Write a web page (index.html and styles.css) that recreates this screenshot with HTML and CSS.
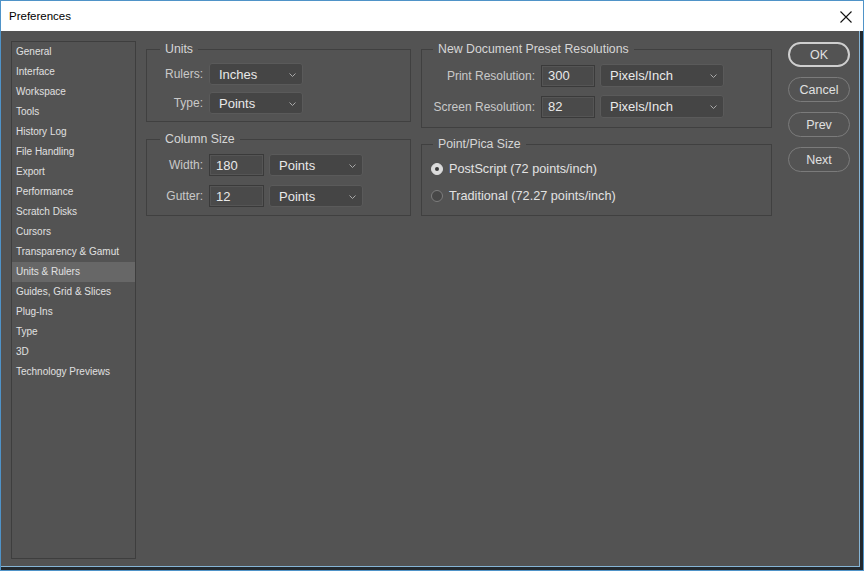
FILE: index.html
```html
<!DOCTYPE html>
<html>
<head>
<meta charset="utf-8">
<title>Preferences</title>
<link rel="stylesheet" href="styles.css">
</head>
<body>
<div class="window">
  <div class="titlebar">
    <span class="title">Preferences</span>
    <span class="close"><svg width="12" height="12" viewBox="0 0 12 12"><path d="M0.5 0.5 L11.5 11.5 M11.5 0.5 L0.5 11.5" stroke="#111" stroke-width="1.1" fill="none"/></svg></span>
  </div>
  <div class="body">
    <ul class="sidebar">
      <li>General</li>
      <li>Interface</li>
      <li>Workspace</li>
      <li>Tools</li>
      <li>History Log</li>
      <li>File Handling</li>
      <li>Export</li>
      <li>Performance</li>
      <li>Scratch Disks</li>
      <li>Cursors</li>
      <li>Transparency &amp; Gamut</li>
      <li class="selected">Units &amp; Rulers</li>
      <li>Guides, Grid &amp; Slices</li>
      <li>Plug-Ins</li>
      <li>Type</li>
      <li>3D</li>
      <li>Technology Previews</li>
    </ul>

    <div class="col col-left">
      <fieldset class="group units">
        <legend>Units</legend>
        <div class="row">
          <span class="label">Rulers:</span>
          <div class="dropdown w94"><span>Inches</span><svg class="chev" width="7" height="4" viewBox="0 0 7 4"><path d="M0.5 0.5 L3.5 3.5 L6.5 0.5" stroke="#a9a9a9" fill="none"/></svg></div>
        </div>
        <div class="row">
          <span class="label">Type:</span>
          <div class="dropdown w94"><span>Points</span><svg class="chev" width="7" height="4" viewBox="0 0 7 4"><path d="M0.5 0.5 L3.5 3.5 L6.5 0.5" stroke="#a9a9a9" fill="none"/></svg></div>
        </div>
      </fieldset>

      <fieldset class="group colsize">
        <legend>Column Size</legend>
        <div class="row">
          <span class="label">Width:</span>
          <div class="input w55">180</div>
          <div class="dropdown w94"><span>Points</span><svg class="chev" width="7" height="4" viewBox="0 0 7 4"><path d="M0.5 0.5 L3.5 3.5 L6.5 0.5" stroke="#a9a9a9" fill="none"/></svg></div>
        </div>
        <div class="row">
          <span class="label">Gutter:</span>
          <div class="input w55">12</div>
          <div class="dropdown w94"><span>Points</span><svg class="chev" width="7" height="4" viewBox="0 0 7 4"><path d="M0.5 0.5 L3.5 3.5 L6.5 0.5" stroke="#a9a9a9" fill="none"/></svg></div>
        </div>
      </fieldset>
    </div>

    <div class="col col-right">
      <fieldset class="group resolutions">
        <legend>New Document Preset Resolutions</legend>
        <div class="row">
          <span class="label">Print Resolution:</span>
          <div class="input w54">300</div>
          <div class="dropdown w124"><span>Pixels/Inch</span><svg class="chev" width="7" height="4" viewBox="0 0 7 4"><path d="M0.5 0.5 L3.5 3.5 L6.5 0.5" stroke="#a9a9a9" fill="none"/></svg></div>
        </div>
        <div class="row">
          <span class="label">Screen Resolution:</span>
          <div class="input w54">82</div>
          <div class="dropdown w124"><span>Pixels/Inch</span><svg class="chev" width="7" height="4" viewBox="0 0 7 4"><path d="M0.5 0.5 L3.5 3.5 L6.5 0.5" stroke="#a9a9a9" fill="none"/></svg></div>
        </div>
      </fieldset>

      <fieldset class="group pica">
        <legend>Point/Pica Size</legend>
        <div class="radio-row">
          <span class="radio checked"></span>
          <span class="radio-label">PostScript (72 points/inch)</span>
        </div>
        <div class="radio-row">
          <span class="radio"></span>
          <span class="radio-label">Traditional (72.27 points/inch)</span>
        </div>
      </fieldset>
    </div>

    <div class="buttons">
      <div class="btn primary">OK</div>
      <div class="btn">Cancel</div>
      <div class="btn">Prev</div>
      <div class="btn">Next</div>
    </div>
  </div>
</div>
</body>
</html>
```

FILE: styles.css
```css
* { box-sizing: border-box; }
html, body { margin: 0; padding: 0; }
body {
  width: 864px;
  height: 571px;
  overflow: hidden;
  background: #535353;
  font-family: "Liberation Sans", Arial, sans-serif;
}
.window {
  width: 864px;
  height: 571px;
  border: 1px solid #4f93c8;
  display: flex;
  flex-direction: column;
  background: #535353;
}
.titlebar {
  height: 30px;
  flex: none;
  background: #ffffff;
  display: flex;
  align-items: center;
  justify-content: space-between;
  padding: 0 11px 0 8px;
}
.title {
  font-size: 11.5px;
  color: #000;
  padding-bottom: 1px;
}
.close { display: flex; padding-top: 1px; }
.body {
  flex: 1;
  display: flex;
  align-items: flex-start;
  padding: 10px 0 0 10px;
  border-right: 3px solid #23292e;
  border-bottom: 3px solid #23292e;
  box-shadow: inset -1px -1px 0 #86b5d6;
}
.sidebar {
  list-style: none;
  margin: 0;
  padding: 0;
  width: 125px;
  height: 518px;
  border: 1px solid #3e3e3e;
  flex: none;
}
.sidebar li {
  height: 20px;
  line-height: 20px;
  padding-left: 4px;
  font-size: 10px;
  color: #e0e0e0;
  white-space: nowrap;
}
.sidebar li.selected { background: #676767; }

.col { display: flex; flex-direction: column; flex: none; }
.col-left { width: 265px; margin-left: 10px; }
.col-right { width: 351px; margin-left: 10px; }

.group {
  margin: 0;
  border: 1px solid #404040;
  padding: 0;
  min-width: 0;
}
.group legend {
  font-size: 12.3px;
  line-height: 16px;
  height: 16px;
  color: #d6d6d6;
  padding: 0 5px;
}
.col-left legend { margin-left: 13px; }
.col-right legend { margin-left: 11px; }

.units { padding: 6px 0 7px 0; }
.colsize { padding: 7px 0 8px 0; margin-top: 9px; }
.resolutions { padding: 7px 0 9px 0; }
.pica { padding: 7px 0 9px 0; margin-top: 8px; }

.row {
  display: flex;
  align-items: center;
  gap: 6px;
}
.units .row + .row { margin-top: 7px; }
.colsize .row + .row { margin-top: 9px; }
.colsize .input { margin-right: -1px; }
.resolutions .row + .row { margin-top: 8px; }
.resolutions .input { margin-right: -1px; }

.label {
  font-size: 12px;
  color: #c9c9c9;
  text-align: right;
  white-space: nowrap;
}
.units .label, .colsize .label { width: 56px; }
.resolutions .label { width: 113px; }

.dropdown {
  height: 22px;
  background: #454545;
  border: 1px solid #5a5a5a;
  border-radius: 3px;
  display: flex;
  align-items: center;
  justify-content: space-between;
  padding: 0 6px 0 9px;
  font-size: 13px;
  color: #e9e9e9;
}
.resolutions .dropdown { height: 23px; }
.chev { flex: none; margin-top: 1px; }
.w94 { width: 94px; }
.w124 { width: 124px; }

.input {
  height: 22px;
  background: #4a4a4a;
  border: 1px solid #3a3a3a;
  box-shadow: inset 0 0 0 1px #555;
  display: flex;
  align-items: center;
  padding-left: 6px;
  font-size: 13px;
  color: #e9e9e9;
}
.w55 { width: 55px; }
.w54 { width: 54px; }

.radio-row {
  display: flex;
  align-items: center;
  height: 20px;
  gap: 6px;
  padding-left: 9px;
}
.radio-row + .radio-row { margin-top: 7px; }
.radio {
  width: 12px;
  height: 12px;
  border-radius: 50%;
  background: #474747;
  border: 1px solid #7d7d7d;
  flex: none;
  position: relative;
}
.radio.checked {
  background: #dcdcdc;
  border-color: #dcdcdc;
}
.radio.checked::after {
  content: "";
  position: absolute;
  left: 3px;
  top: 3px;
  width: 4px;
  height: 4px;
  border-radius: 50%;
  background: #3a3a3a;
}
.radio-label {
  font-size: 12.7px;
  color: #e2e2e2;
  white-space: nowrap;
}

.buttons {
  display: flex;
  flex-direction: column;
  gap: 10px;
  margin-left: 16px;
  margin-top: 1px;
  flex: none;
}
.btn {
  width: 62px;
  height: 25px;
  border: 1px solid #7b7b7b;
  border-radius: 13px;
  display: flex;
  align-items: center;
  justify-content: center;
  font-size: 12.5px;
  color: #e0e0e0;
}
.btn.primary {
  border: 2px solid #cfcfcf;
}
```
